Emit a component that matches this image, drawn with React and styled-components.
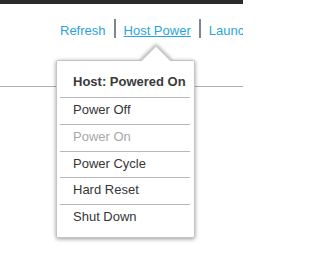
import React from "react";
import styled, { createGlobalStyle } from "styled-components";

const Global = createGlobalStyle`
  html, body { margin: 0; padding: 0; background: #fff; }
  body { font-family: "Liberation Sans", Arial, sans-serif; overflow: hidden; }
`;

const Page = styled.div`
  position: relative;
  width: 243px;
  height: 270px;
  overflow: hidden;
`;

const TopBar = styled.div`
  height: 4px;
  background: #2b2b2b;
`;

const Nav = styled.nav`
  display: flex;
  align-items: flex-start;
  padding: 15px 0 0 60px;
  height: 19px;
  white-space: nowrap;
`;

const NavLink = styled.a`
  flex-shrink: 0;
  padding-top: 4px;
  font-size: 13px;
  line-height: 15px;
  color: #2aa4dc;
  text-decoration: ${(p) => (p.$active ? "underline" : "none")};
  text-underline-offset: 1px;
  cursor: pointer;
`;

const Divider = styled.span`
  display: block;
  flex-shrink: 0;
  width: 2px;
  height: 19px;
  margin: 0 8px;
  background: #7e8790;
`;

const Rule = styled.div`
  margin-top: 48px;
  height: 1px;
  background: #b0b0b0;
`;

const Popover = styled.div`
  position: absolute;
  left: 56px;
  top: 60px;
  width: 139px;
  box-sizing: border-box;
  background: #fff;
  border: 1px solid #c4c4c4;
  border-radius: 2px;
  box-shadow: 0 1px 4px rgba(0, 0, 0, 0.4);
`;

const Arrow = styled.div`
  position: absolute;
  left: 88px;
  top: -11.5px;
  width: 22px;
  height: 22px;
  background: #fff;
  border: 1px solid #c4c4c4;
  box-sizing: border-box;
  transform: rotate(45deg);
  box-shadow: -1px -1px 4px rgba(0, 0, 0, 0.35);
`;

const Menu = styled.ul`
  position: relative;
  z-index: 1;
  list-style: none;
  margin: 0;
  padding: 0 4px 6px 3px;
  background: #fff;
`;

const MenuHeader = styled.li`
  padding: 13px 0 8px 13px;
  font-size: 13px;
  line-height: 15px;
  font-weight: bold;
  color: #3a3a3a;
`;

const MenuItem = styled.li`
  border-top: 1px solid #b8b8b8;
  padding: 4px 0 6.75px 13px;
  font-size: 13px;
  line-height: 15px;
  color: ${(p) => (p.$disabled ? "#a8a8a8" : "#363636")};
  cursor: ${(p) => (p.$disabled ? "default" : "pointer")};
`;

const items = [
  { label: "Power Off" },
  { label: "Power On", disabled: true },
  { label: "Power Cycle" },
  { label: "Hard Reset" },
  { label: "Shut Down" },
];

export default function App() {
  return (
    <>
      <Global />
      <Page>
        <TopBar />
        <Nav>
          <NavLink>Refresh</NavLink>
          <Divider />
          <NavLink $active>Host Power</NavLink>
          <Divider />
          <NavLink>Launch</NavLink>
        </Nav>
        <Rule />
        <Popover>
          <Arrow />
          <Menu>
            <MenuHeader>Host: Powered On</MenuHeader>
            {items.map((it) => (
              <MenuItem key={it.label} $disabled={it.disabled}>
                {it.label}
              </MenuItem>
            ))}
          </Menu>
        </Popover>
      </Page>
    </>
  );
}
